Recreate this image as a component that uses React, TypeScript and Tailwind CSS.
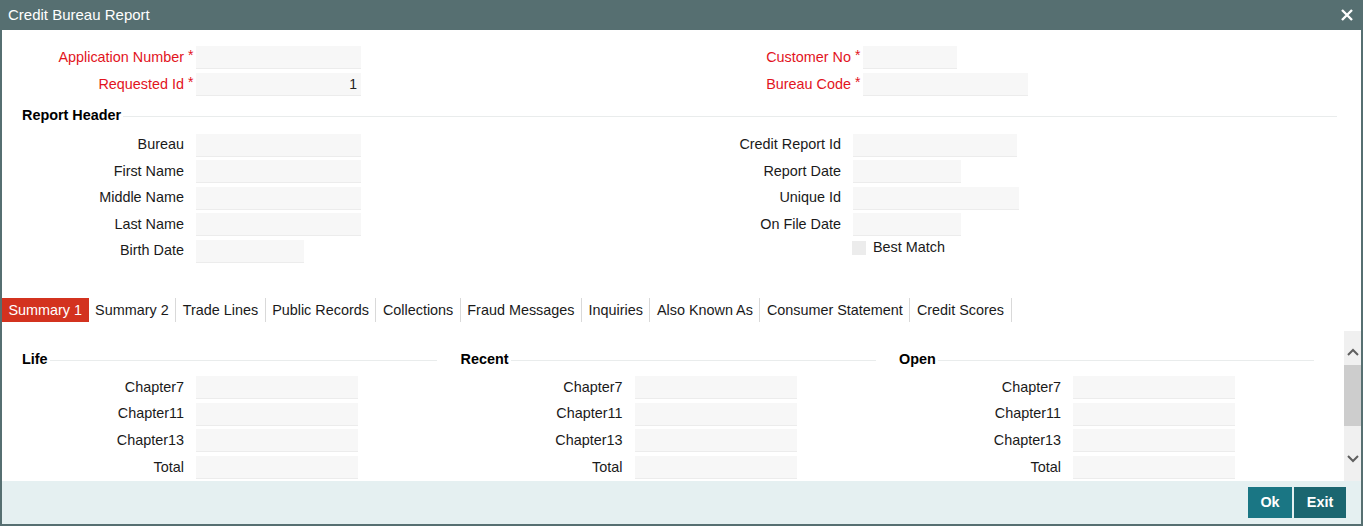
import React from "react";

const FONT = "font-['Liberation_Sans',Arial,sans-serif]";

function Input({ w, value }: { w: string; value?: string }) {
  return (
    <div
      className={`${w} h-[23px] bg-[#f7f7f7] border-b border-[#ececec] text-right pr-[4px] text-[14px] leading-[23px] text-[#222]`}
    >
      {value}
    </div>
  );
}

function Field({
  label,
  labelW,
  inputW,
  required,
  value,
  rowH = "h-[27px]",
}: {
  label: string;
  labelW: string;
  inputW: string;
  required?: boolean;
  value?: string;
  rowH?: string;
}) {
  return (
    <div className={`flex items-center ${rowH}`}>
      <div
        className={`${labelW} text-right text-[14.4px] whitespace-nowrap ${
          required ? "text-[#e2141d]" : "text-[#1a1a1a]"
        }`}
      >
        {label}
      </div>
      <div className="w-[12px] pl-[4px] text-[#e2141d] text-[14px] self-start pt-[1px]">
        {required ? "*" : ""}
      </div>
      <Input w={inputW} value={value} />
    </div>
  );
}

function SectionTitle({ title }: { title: string }) {
  return (
    <div className="flex items-center gap-[2px] h-[20px]">
      <span className="font-bold text-[14.4px] text-black">{title}</span>
      <div className="flex-1 h-px bg-[#e9ecec]" />
    </div>
  );
}

const tabs = [
  "Summary 1",
  "Summary 2",
  "Trade Lines",
  "Public Records",
  "Collections",
  "Fraud Messages",
  "Inquiries",
  "Also Known As",
  "Consumer Statement",
  "Credit Scores",
];

function Chevron({ up }: { up?: boolean }) {
  return (
    <svg width="12" height="8" viewBox="0 0 12 8">
      <path
        d={up ? "M1 7 L6 2 L11 7" : "M1 1 L6 6 L11 1"}
        fill="none"
        stroke="#5f5f5f"
        strokeWidth="2"
      />
    </svg>
  );
}

export default function App() {
  const summaryCols = ["Life", "Recent", "Open"];
  return (
    <div className={`w-[1363px] h-[526px] bg-[#566f71] flex flex-col ${FONT}`}>
      {/* title bar */}
      <div className="h-[30px] flex items-center justify-between pl-[8px] pr-[10px]">
        <span className="text-white text-[15px]">Credit Bureau Report</span>
        <svg width="12" height="12" viewBox="0 0 12 12">
          <path d="M1 1 L11 11 M11 1 L1 11" stroke="#fff" strokeWidth="2.4" />
        </svg>
      </div>

      <div className="flex-1 mx-[2px] mb-[2px] bg-white flex flex-col">
        {/* header form */}
        <div className="h-[268px] pt-[14px]">
          <div className="flex">
            <div className="w-[678px]">
              <Field label="Application Number" labelW="w-[182px]" inputW="w-[165px]" required />
              <Field label="Requested Id" labelW="w-[182px]" inputW="w-[165px]" required value="1" />
            </div>
            <div>
              <Field label="Customer No" labelW="w-[171px]" inputW="w-[94px]" required />
              <Field label="Bureau Code" labelW="w-[171px]" inputW="w-[165px]" required />
            </div>
          </div>

          <div className="pl-[20px] pr-[24px] pt-[8px] pb-[6px]">
            <SectionTitle title="Report Header" />
          </div>

          <div className="flex">
            <div className="w-[678px]">
              <Field label="Bureau" labelW="w-[182px]" inputW="w-[165px]" rowH="h-[26.5px]" />
              <Field label="First Name" labelW="w-[182px]" inputW="w-[165px]" rowH="h-[26.5px]" />
              <Field label="Middle Name" labelW="w-[182px]" inputW="w-[165px]" rowH="h-[26.5px]" />
              <Field label="Last Name" labelW="w-[182px]" inputW="w-[165px]" rowH="h-[26.5px]" />
              <Field label="Birth Date" labelW="w-[182px]" inputW="w-[108px]" rowH="h-[26.5px]" />
            </div>
            <div>
              <Field label="Credit Report Id" labelW="w-[161px]" inputW="w-[164px]" rowH="h-[26.5px]" />
              <Field label="Report Date" labelW="w-[161px]" inputW="w-[108px]" rowH="h-[26.5px]" />
              <Field label="Unique Id" labelW="w-[161px]" inputW="w-[166px]" rowH="h-[26.5px]" />
              <Field label="On File Date" labelW="w-[161px]" inputW="w-[108px]" rowH="h-[26.5px]" />
              <div className="flex items-center h-[20px] pl-[172px] gap-[7px]">
                <div className="w-[14px] h-[14px] bg-[#ececec]" />
                <span className="text-[14.4px] text-[#1a1a1a]">Best Match</span>
              </div>
            </div>
          </div>
        </div>

        {/* tabs */}
        <div className="flex h-[24px]">
          {tabs.map((t, i) => (
            <div
              key={t}
              className={`px-[6.5px] text-[14.4px] leading-[24px] whitespace-nowrap ${
                i === 0
                  ? "bg-[#d3321f] text-white"
                  : "text-[#1a1a1a] border-r border-[#d9d9d9]"
              }`}
            >
              {t}
            </div>
          ))}
        </div>

        {/* scroll area */}
        <div className="mt-[9px] h-[150px] flex">
          <div className="flex-1 overflow-hidden pl-[20px] pt-[19px]">
            <div className="flex gap-[23.5px]">
              {summaryCols.map((c) => (
                <div key={c} className="w-[415px]">
                  <SectionTitle title={c} />
                  <div className="pt-[4px]">
                    {["Chapter7", "Chapter11", "Chapter13", "Total"].map((l) => (
                      <Field
                        key={l}
                        label={l}
                        labelW="w-[162px]"
                        inputW="w-[162px]"
                        rowH="h-[26.8px]"
                      />
                    ))}
                  </div>
                </div>
              ))}
            </div>
          </div>
          <div className="w-[17px] bg-[#f0f0f0] flex flex-col">
            <div className="h-[34px] flex justify-center pt-[17px]">
              <Chevron up />
            </div>
            <div className="h-[61px] bg-[#cdcdcd]" />
            <div className="flex-1 flex justify-center pt-[29px]">
              <Chevron />
            </div>
          </div>
        </div>

        {/* footer */}
        <div className="flex-1 bg-[#e5f0f1] flex justify-end items-start pt-[6px] pr-[15px] gap-[2px]">
          <button className="w-[44px] h-[31px] bg-[#1a7684] text-white font-bold text-[14.4px]">
            Ok
          </button>
          <button className="w-[52px] h-[31px] bg-[#1b6670] text-white font-bold text-[14.4px]">
            Exit
          </button>
        </div>
      </div>
    </div>
  );
}
